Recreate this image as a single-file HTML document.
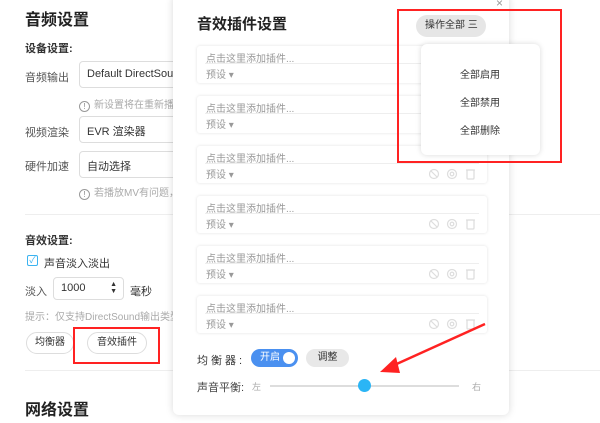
<!DOCTYPE html><html><head><meta charset="utf-8"><style>
*{margin:0;padding:0;box-sizing:border-box}
body{width:600px;height:423px;overflow:hidden;background:#fff;font-family:"Liberation Sans","Noto Sans CJK SC",sans-serif;position:relative;color:#333}
.a{position:absolute;white-space:nowrap}
.hl{position:absolute;height:1px;background:#eee}
.inp{position:absolute;border:1px solid #ddd;border-radius:4px;font-size:11px;padding:6px 7px;color:#333;background:#fff}
.hint{font-size:10px;color:#aaa}
.ic{display:inline-block;width:11px;height:11px;border:1px solid #999;border-radius:50%;font-size:8px;text-align:center;line-height:9px;color:#888;margin-right:4px;vertical-align:-1px}
.btn{position:absolute;border:1px solid #ddd;border-radius:13px;font-size:10px;text-align:center;background:#fff}
.modal{position:absolute;left:173px;top:-6px;width:336px;height:421px;background:#fff;border-radius:6px;box-shadow:0 0 8px rgba(0,0,0,.15)}
.card{position:absolute;left:24px;width:290px;height:37px;border-radius:3px;box-shadow:0 0 3px rgba(0,0,0,.12)}
.card .t{position:absolute;left:9px;top:4px;font-size:10px;color:#999}
.card .ln{position:absolute;left:8px;right:8px;top:17px;height:1px;background:#eee}
.card .p{position:absolute;left:9px;top:20px;font-size:10px;color:#999}
.card .icons{position:absolute;right:10px;top:22px;width:48px;height:12px}
.red{position:absolute;border:2px solid #f22}
</style></head><body>
<div class="a" style="left:25px;top:6px;font-size:16px;font-weight:bold;color:#222">音频设置</div>
<div class="a" style="left:25px;top:40px;font-size:11px;font-weight:bold">设备设置:</div>
<div class="a" style="left:25px;top:69px;font-size:11px;color:#555">音频输出</div>
<div class="inp" style="left:79px;top:61px;width:120px;height:27px">Default DirectSound</div>
<div class="a hint" style="left:79px;top:96px"><span class="ic">!</span>新设置将在重新播放</div>
<div class="a" style="left:25px;top:124px;font-size:11px;color:#555">视频渲染</div>
<div class="inp" style="left:79px;top:116px;width:120px;height:27px">EVR 渲染器</div>
<div class="a" style="left:25px;top:158px;font-size:11px;color:#555">硬件加速</div>
<div class="inp" style="left:79px;top:151px;width:120px;height:27px">自动选择</div>
<div class="a hint" style="left:79px;top:184px"><span class="ic">!</span>若播放MV有问题，</div>
<div class="hl" style="left:25px;top:214px;width:575px"></div>
<div class="a" style="left:25px;top:232px;font-size:11px;font-weight:bold">音效设置:</div>
<div class="a" style="left:27px;top:255px;width:11px;height:11px;border:1px solid #3bb3f0;border-radius:2px;color:#3bb3f0;font-size:9px;line-height:9px;text-align:center">✓</div>
<div class="a" style="left:44px;top:255px;font-size:11px">声音淡入淡出</div>
<div class="a" style="left:25px;top:283px;font-size:11px;color:#555">淡入</div>
<div class="inp" style="left:53px;top:277px;width:71px;height:23px;padding:4px 7px">1000<span style="position:absolute;right:6px;top:3px;font-size:7px;line-height:7px">▲<br>▼</span></div>
<div class="a" style="left:130px;top:283px;font-size:11px">毫秒</div>
<div class="a hint" style="left:25px;top:308px">提示：仅支持DirectSound输出类型</div>
<div class="btn" style="left:26px;top:332px;width:48px;height:22px;line-height:20px">均衡器</div>
<div class="btn" style="left:87px;top:332px;width:60px;height:22px;line-height:20px">音效插件</div>
<div class="hl" style="left:25px;top:370px;width:575px"></div>
<div class="a" style="left:25px;top:396px;font-size:16px;font-weight:bold;color:#222">网络设置</div>

<div class="modal">
<div class="a" style="right:6px;top:2px;font-size:12px;color:#999">×</div>
<div class="a" style="left:24px;top:19px;font-size:15px;font-weight:bold;color:#222">音效插件设置</div>
<div class="a" style="left:243px;top:21px;width:70px;height:22px;border-radius:11px;background:#e6e6e6;font-size:10px;line-height:22px;padding-left:9px;color:#333">操作全部 三</div>
<div class="card" style="top:52px"><div class="t">点击这里添加插件...</div><div class="ln"></div><div class="p">预设 ▾</div></div>
<div class="card" style="top:102px"><div class="t">点击这里添加插件...</div><div class="ln"></div><div class="p">预设 ▾</div></div>
<div class="card" style="top:152px"><div class="t">点击这里添加插件...</div><div class="ln"></div><div class="p">预设 ▾</div><svg class="icons" viewBox="0 0 48 12" fill="none" stroke="#ddd" stroke-width="1.2"><circle cx="5" cy="6" r="4.5"/><path d="M2 3l6 6"/><circle cx="23" cy="6" r="4.5"/><circle cx="23" cy="6" r="1.8"/><rect x="38" y="2" width="7" height="9" rx="1"/><path d="M37 2h9"/></svg></div>
<div class="card" style="top:202px"><div class="t">点击这里添加插件...</div><div class="ln"></div><div class="p">预设 ▾</div><svg class="icons" viewBox="0 0 48 12" fill="none" stroke="#ddd" stroke-width="1.2"><circle cx="5" cy="6" r="4.5"/><path d="M2 3l6 6"/><circle cx="23" cy="6" r="4.5"/><circle cx="23" cy="6" r="1.8"/><rect x="38" y="2" width="7" height="9" rx="1"/><path d="M37 2h9"/></svg></div>
<div class="card" style="top:252px"><div class="t">点击这里添加插件...</div><div class="ln"></div><div class="p">预设 ▾</div><svg class="icons" viewBox="0 0 48 12" fill="none" stroke="#ddd" stroke-width="1.2"><circle cx="5" cy="6" r="4.5"/><path d="M2 3l6 6"/><circle cx="23" cy="6" r="4.5"/><circle cx="23" cy="6" r="1.8"/><rect x="38" y="2" width="7" height="9" rx="1"/><path d="M37 2h9"/></svg></div>
<div class="card" style="top:302px"><div class="t">点击这里添加插件...</div><div class="ln"></div><div class="p">预设 ▾</div><svg class="icons" viewBox="0 0 48 12" fill="none" stroke="#ddd" stroke-width="1.2"><circle cx="5" cy="6" r="4.5"/><path d="M2 3l6 6"/><circle cx="23" cy="6" r="4.5"/><circle cx="23" cy="6" r="1.8"/><rect x="38" y="2" width="7" height="9" rx="1"/><path d="M37 2h9"/></svg></div>
<div class="a" style="left:24px;top:358px;font-size:11px;letter-spacing:3px">均衡器:</div>
<div class="a" style="left:78px;top:355px;width:47px;height:18px;border-radius:9px;background:#4a90f0;color:#fff;font-size:10px;line-height:18px;padding-left:9px">开启<span style="position:absolute;right:3px;top:3px;width:12px;height:12px;border-radius:50%;background:#fff"></span></div>
<div class="a" style="left:133px;top:355px;width:43px;height:18px;border-radius:9px;background:#e8e8e8;font-size:10px;line-height:18px;text-align:center">调整</div>
<div class="a" style="left:24px;top:385px;font-size:11px;color:#444">声音平衡:</div>
<div class="a" style="left:79px;top:386px;font-size:9px;color:#aaa">左</div>
<div class="a" style="left:97px;top:391px;width:189px;height:2px;background:#ddd"></div>
<div class="a" style="left:185px;top:385px;width:13px;height:13px;border-radius:50%;background:#2bb5f5"></div>
<div class="a" style="left:299px;top:386px;font-size:9px;color:#aaa">右</div>
</div>

<div class="a" style="left:421px;top:44px;width:119px;height:111px;background:#fff;border-radius:6px;box-shadow:0 0 6px rgba(0,0,0,.15)">
<div class="a" style="left:39px;top:22px;font-size:10px">全部启用</div>
<div class="a" style="left:39px;top:50px;font-size:10px">全部禁用</div>
<div class="a" style="left:39px;top:78px;font-size:10px">全部删除</div>
</div>
<div class="red" style="left:397px;top:9px;width:165px;height:154px"></div>
<div class="red" style="left:73px;top:327px;width:87px;height:37px"></div>
<svg class="a" style="left:370px;top:315px" width="125" height="65" viewBox="0 0 125 65"><path d="M115 9L20 52" stroke="#f22" stroke-width="2.5"/><path d="M10 57L26 42L30 58Z" fill="#f22"/></svg>
</body></html>
